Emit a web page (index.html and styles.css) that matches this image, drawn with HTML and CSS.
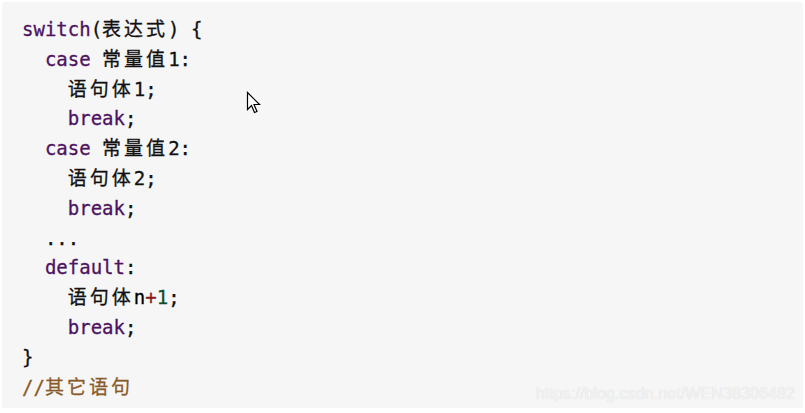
FILE: index.html
```html
<!DOCTYPE html>
<html>
<head>
<meta charset="utf-8">
<link rel="stylesheet" href="styles.css">
</head>
<body>
<div class="box">
<div class="code">
<div class="ln"><span class="kw">switch</span>(<span class="zh">表达式</span>) {</div>
<div class="ln">  <span class="kw">case</span> <span class="zh">常量值</span>1:</div>
<div class="ln">    <span class="zh">语句体</span>1;</div>
<div class="ln">    <span class="kw">break</span>;</div>
<div class="ln">  <span class="kw">case</span> <span class="zh">常量值</span>2:</div>
<div class="ln">    <span class="zh">语句体</span>2;</div>
<div class="ln">    <span class="kw">break</span>;</div>
<div class="ln">  ...</div>
<div class="ln">  <span class="kw">default</span>:</div>
<div class="ln">    <span class="zh">语句体</span><span class="var">n</span><span class="op">+</span><span class="num">1</span>;</div>
<div class="ln">    <span class="kw">break</span>;</div>
<div class="ln">}</div>
<div class="ln"><span class="cm">//<span class="zh">其它语句</span></span></div>
</div>
<div class="watermark">https://blog.csdn.net/WEN38306482</div>
<svg class="cursor" width="16" height="24" viewBox="0 0 16 24">
<path d="M1.5 1.5 L1.5 18.5 L5.5 14.5 L8.5 21.5 L11 20.5 L8 13.5 L13.5 13.5 Z" fill="#fff" stroke="#000" stroke-width="1.2" stroke-linejoin="miter"/>
</svg>
</div>
</body>
</html>
```
FILE: styles.css
```css
html, body {
  margin: 0;
  padding: 0;
  background: #ffffff;
}
.box {
  position: relative;
  margin: 2px;
  height: 406px;
  box-sizing: border-box;
  background: #f6f6f6;
  border-radius: 3px;
  padding: 13px 0 0 20px;
}
.code {
  font-family: "DejaVu Sans Mono", monospace;
  font-size: 19px;
  color: #111;
  -webkit-text-stroke: 0.3px currentColor;
}
.ln {
  white-space: pre;
  height: 29.8px;
  line-height: 29.8px;
  overflow: visible;
}
.zh {
  font-family: "Noto Sans CJK SC", sans-serif;
  letter-spacing: 3px;
  line-height: 1;
  color: #111;
}
.kw { color: #4d1260; }
.cm, .cm .zh { color: #8a5a28; }
.var { color: #000; }
.op { color: #8b1a1a; }
.num { color: #0f4d2f; }
.watermark {
  position: absolute;
  right: 8px;
  bottom: 5px;
  font-family: "Liberation Sans", Arial, sans-serif;
  font-size: 16.2px;
  color: #f3f3f3;
  text-shadow: 0 0 1px #d4d4d4;
}
.cursor {
  position: absolute;
  left: 244px;
  top: 89px;
}
```
